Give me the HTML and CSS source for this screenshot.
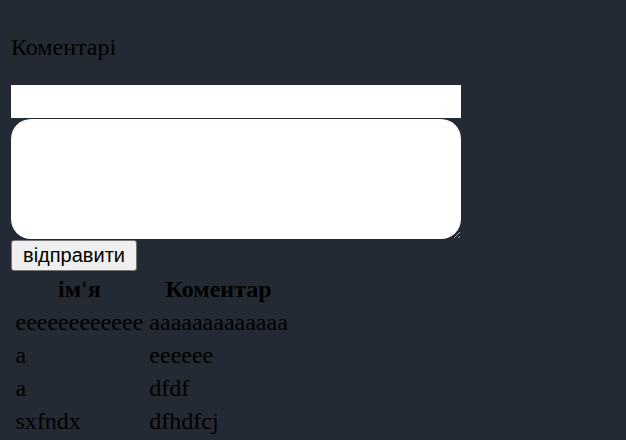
FILE: index.html
```html
<!DOCTYPE html>
<html lang="uk">
<head>
<meta charset="utf-8">
<title>Коментарі</title>
<link rel="stylesheet" href="styles.css">
</head>
<body>
<div class="page">
  <p class="title">Коментарі</p>
  <form class="form">
    <input class="name-input" type="text">
    <textarea class="comment-input"></textarea>
    <button class="send" type="button">відправити</button>
  </form>
  <table class="comments">
    <thead>
      <tr><th>ім'я</th><th>Коментар</th></tr>
    </thead>
    <tbody>
      <tr><td>eeeeeeeeeeee</td><td>aaaaaaaaaaaaa</td></tr>
      <tr><td>a</td><td>eeeeee</td></tr>
      <tr><td>a</td><td>dfdf</td></tr>
      <tr><td>sxfndx</td><td>dfhdfcj</td></tr>
    </tbody>
  </table>
</div>
</body>
</html>
```
FILE: styles.css
```css
html, body {
  margin: 0;
  padding: 0;
  background: #242a33;
}
body {
  font-family: "Liberation Serif", "Times New Roman", serif;
  font-size: 24px;
  color: #000;
}
.page {
  padding: 33px 0 0 11px;
}
.title {
  margin: 0;
  line-height: 28px;
}
.form {
  display: flex;
  flex-direction: column;
  align-items: flex-start;
  margin-top: 24px;
}
.name-input {
  display: block;
  box-sizing: border-box;
  width: 450px;
  height: 33px;
  margin: 0 0 1px 0;
  border: none;
  padding: 0;
  background: #fff;
  outline: none;
}
.comment-input {
  display: block;
  box-sizing: border-box;
  width: 450px;
  height: 120px;
  margin: 0 0 1px 0;
  border: none;
  border-radius: 20px;
  padding: 0;
  background: #fff;
}
.send {
  box-sizing: border-box;
  width: 126px;
  height: 31px;
  margin: 0;
  padding: 0;
  font-family: "Liberation Sans", Arial, sans-serif;
  font-size: 20px;
  color: #000;
  background: #efefef;
  border: 1px solid #767676;
  border-radius: 3px;
}
.comments {
  border-spacing: 3px;
  margin: 0;
}
.comments th,
.comments td {
  padding: 1.5px;
  line-height: 27px;
  font-size: 24px;
}
.comments th {
  font-weight: bold;
  text-align: center;
}
.comments td {
  text-align: left;
}
```
